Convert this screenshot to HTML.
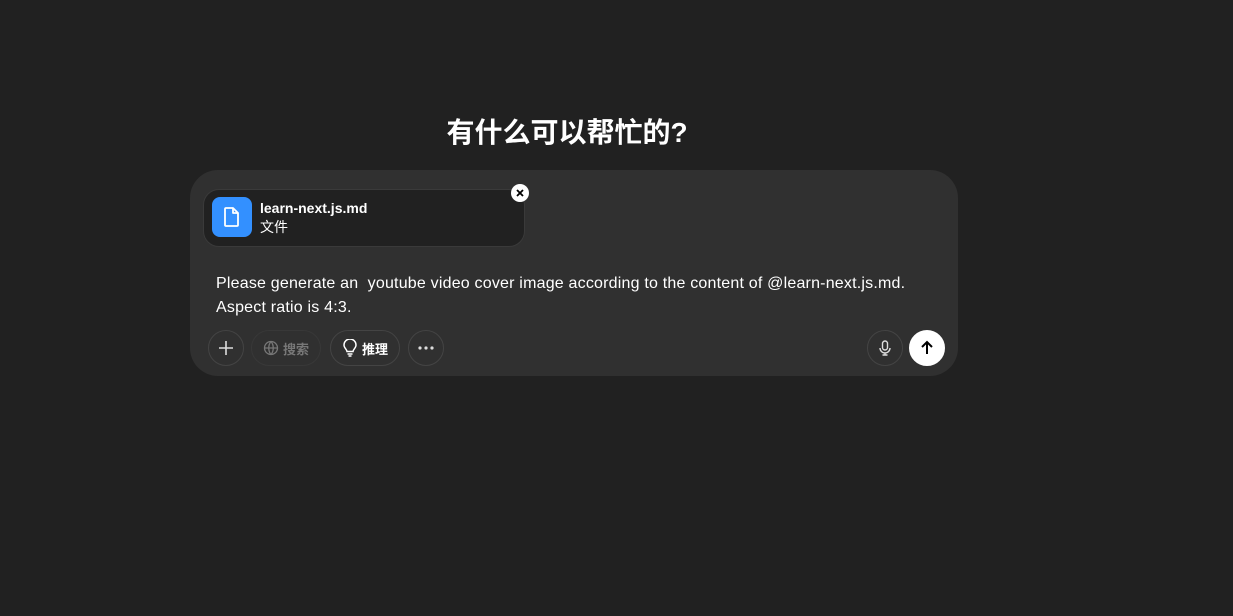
<!DOCTYPE html>
<html><head><meta charset="utf-8"><style>
*{box-sizing:border-box;margin:0;padding:0}
body{width:1233px;height:616px;background:#212121;font-family:"Liberation Sans","Noto Sans CJK SC",sans-serif;color:#fff;position:relative;overflow:hidden}
h1{position:absolute;left:0;width:1134px;top:114px;text-align:center;font-size:28px;font-weight:700;line-height:38px}
.box{position:absolute;left:190px;top:170px;width:768px;height:206px;background:#303030;border-radius:28px}
.file{position:absolute;left:13px;top:19px;width:322px;height:58px;background:#212121;border:1px solid #3a3a3a;border-radius:16px}
.ic{position:absolute;left:8px;top:7px;width:40px;height:40px;background:#3390ff;border-radius:8px;display:flex;align-items:center;justify-content:center}
.fn{position:absolute;left:56px;top:9px;font-size:14px;font-weight:700;line-height:18px}
.ft{position:absolute;left:56px;top:28px;font-size:14px;line-height:18px}
.x{position:absolute;left:321px;top:14px;width:18px;height:18px;border-radius:50%;background:#fff;display:flex;align-items:center;justify-content:center}
.txt{position:absolute;left:26px;top:102px;font-size:16px;line-height:24px;width:720px;letter-spacing:0.2px}
.btn{position:absolute;top:160px;height:36px;border:1px solid #444;border-radius:18px;display:flex;align-items:center;justify-content:center;font-size:13px;font-weight:700;gap:4px}
</style></head><body>
<h1>有什么可以帮忙的?</h1>
<div class="box">
 <div class="file">
  <div class="ic"><svg width="20" height="22" viewBox="0 0 20 22" fill="none" stroke="#fff" stroke-width="1.8" stroke-linejoin="round"><path d="M4 2h7l5 5v12a1 1 0 0 1-1 1H4a1 1 0 0 1-1-1V3a1 1 0 0 1 1-1z"/><path d="M11 2v5h5"/></svg></div>
  <div class="fn">learn-next.js.md</div>
  <div class="ft">文件</div>
 </div>
 <div class="x"><svg width="8" height="8" viewBox="0 0 8 8" stroke="#000" stroke-width="1.8"><path d="M1 1l6 6M7 1L1 7"/></svg></div>
 <div class="txt">Please generate an&nbsp; youtube video cover image according to the content of @learn-next.js.md. Aspect ratio is 4:3.</div>
 <div class="btn" style="left:18px;width:36px"><svg width="16" height="16" stroke="#ddd" stroke-width="1.6"><path d="M8 1v14M1 8h14"/></svg></div>
 <div class="btn" style="left:61px;width:70px;border-color:#383838;color:#777"><svg width="16" height="16" viewBox="0 0 16 16" fill="none" stroke="#777" stroke-width="1.3"><circle cx="8" cy="8" r="6.5"/><path d="M1.5 8h13M8 1.5c-3 3.5-3 9.5 0 13M8 1.5c3 3.5 3 9.5 0 13"/></svg>搜索</div>
 <div class="btn" style="left:140px;width:70px"><svg width="16" height="18" viewBox="0 0 16 18" fill="none" stroke="#fff" stroke-width="1.5"><path d="M5 12.5c0-2-3-3.5-3-6.5a6 6 0 0 1 12 0c0 3-3 4.5-3 6.5z"/><path d="M5.5 15h5M6.5 17h3"/></svg>推理</div>
 <div class="btn" style="left:218px;width:36px"><svg width="16" height="4"><circle cx="2" cy="2" r="1.6" fill="#ddd"/><circle cx="8" cy="2" r="1.6" fill="#ddd"/><circle cx="14" cy="2" r="1.6" fill="#ddd"/></svg></div>
 <div class="btn" style="left:677px;width:36px;border-color:#444"><svg width="14" height="16" viewBox="0 0 14 16" fill="none" stroke="#ddd" stroke-width="1.4"><rect x="4.5" y="1" width="5" height="9" rx="2.5"/><path d="M2 8a5 5 0 0 0 10 0M7 13v2M4.5 15h5"/></svg></div>
 <div class="btn" style="left:719px;width:36px;background:#fff;border-color:#fff"><svg width="16" height="16" viewBox="0 0 16 16" fill="none" stroke="#000" stroke-width="2"><path d="M8 14V2M3 7l5-5 5 5"/></svg></div>
</div>
</body></html>
